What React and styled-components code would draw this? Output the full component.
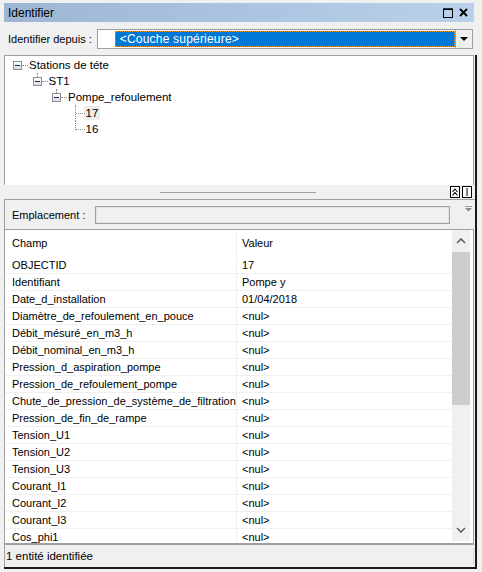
import React from "react"
import styled, { createGlobalStyle } from "styled-components"

const GlobalStyle = createGlobalStyle`
  html, body {
    margin: 0;
    padding: 0;
    background: #f0f0f0;
  }
  * {
    box-sizing: border-box;
  }
`

const font = `"Liberation Sans", Arial, sans-serif`

const Window = styled.div`
  width: 477px;
  height: 569px;
  padding: 3px 0 0 4px;
  background: #f0f0f0;
  font-family: ${font};
  font-size: 11px;
  color: #000;
  display: flex;
  flex-direction: column;
`

const TitleBar = styled.div`
  width: 470px;
  height: 19px;
  flex: none;
  display: flex;
  align-items: center;
  padding: 0 6px 0 4px;
  background: linear-gradient(to right, #9db6d4, #b9d1ea);
  font-size: 12px;
  .title {
    flex: 1;
  }
  svg {
    display: block;
  }
`

const TitleButtons = styled.div`
  display: flex;
  gap: 6px;
  align-items: center;
`

const Toolbar = styled.div`
  width: 470px;
  height: 33px;
  flex: none;
  display: flex;
  align-items: center;
  padding: 1px 1px 0 4px;
  gap: 5px;
`

const Combo = styled.div`
  flex: 1;
  height: 20px;
  display: flex;
  border: 1px solid #a0a0a0;
  background: #fff;
  .swatch {
    width: 17px;
    background: #fff;
  }
  .value {
    flex: 1;
    margin: 1px 0;
    background: #0078d7;
    border: 1px dotted #f39a2c;
    color: #fff;
    font-size: 12px;
    letter-spacing: 0.2px;
    padding-left: 4px;
    display: flex;
    align-items: center;
  }
`

const DropButton = styled.div`
  width: 17px;
  display: flex;
  align-items: center;
  justify-content: center;
  background: #f0f0f0;
  border-left: 1px solid #a0a0a0;
`

const Body = styled.div`
  flex: 1;
  display: flex;
  flex-direction: column;
  border-right: 2px solid #1a1a1a;
  border-bottom: 2px solid #1a1a1a;
  min-height: 0;
`

const Tree = styled.div`
  width: 470px;
  height: 130px;
  flex: none;
  background: #fff;
  border: 1px solid #a0a0a0;
  border-bottom: none;
  padding-top: 1px;
`

const TreeRow = styled.div`
  height: 16px;
  display: flex;
  align-items: center;
  padding-left: ${({ level }) => 8 + level * 19.5}px;
  font-size: 11.5px;
`

const Expander = styled.span`
  position: relative;
  width: 9px;
  height: 9px;
  flex: none;
  border: 1px solid #8e8f8f;
  background: linear-gradient(#ffffff, #d6dbe6);
  &::before {
    content: "";
    position: absolute;
    left: 1px;
    top: 3px;
    width: 5px;
    height: 1px;
    background: #1c2d4c;
  }
  &::after {
    content: "";
    display: ${({ stub }) => (stub ? "block" : "none")};
    position: absolute;
    left: 3px;
    top: -5px;
    height: 4px;
    border-left: 1px dotted #8a8a8a;
  }
`

const Stub = styled.span`
  width: 6px;
  flex: none;
  border-top: 1px dotted #8a8a8a;
  margin-right: 1px;
`

const LeafLines = styled.span`
  align-self: flex-start;
  width: 11px;
  flex: none;
  margin-left: 3px;
  position: relative;
  border-left: 1px dotted #8a8a8a;
  height: ${({ last }) => (last ? "9px" : "16px")};
  &::after {
    content: "";
    position: absolute;
    left: 0;
    top: 8px;
    width: 9px;
    border-top: 1px dotted #8a8a8a;
  }
`

const NodeLabel = styled.span`
  padding: 1px 2px;
  margin-left: -2px;
  background: ${({ selected }) => (selected ? "#ececec" : "transparent")};
`

const Splitter = styled.div`
  width: 470px;
  height: 14px;
  flex: none;
  display: flex;
  align-items: center;
  padding-right: 2px;
  .grip {
    margin-left: 156px;
    width: 156px;
    height: 1px;
    background: #a0a0a0;
  }
  .spacer {
    flex: 1;
  }
`

const MiniButton = styled.div`
  width: 10px;
  height: 12px;
  margin-left: 2px;
  border: 1px solid #000;
  background: #fff;
  display: flex;
  align-items: center;
  justify-content: center;
  svg {
    display: block;
  }
`

const Details = styled.div`
  flex: 1;
  display: flex;
  flex-direction: column;
  border-top: 1px solid #a0a0a0;
  border-left: 1px solid #a0a0a0;
  min-height: 0;
`

const LocationRow = styled.div`
  height: 29px;
  flex: none;
  display: flex;
  align-items: center;
  padding: 0 0 0 7px;
  .label {
    width: 83px;
  }
  .glyph {
    margin-left: 15px;
    align-self: flex-start;
    margin-top: 6px;
  }
`

const LocationField = styled.div`
  width: 355px;
  height: 18px;
  border: 1px solid #a0a0a0;
  box-shadow: inset 0 0 0 1px #e3e3e3;
  background: #f0f0f0;
`

const Grid = styled.div`
  flex: 1;
  width: 469px;
  display: flex;
  background: #fff;
  border-top: 1px solid #a0a0a0;
  border-right: 1px solid #a0a0a0;
  border-bottom: 2px solid #a0a0a0;
  padding: 0 3px 0 0;
  min-height: 0;
  overflow: hidden;
`

const Table = styled.div`
  flex: 1;
  display: flex;
  flex-direction: column;
  overflow: hidden;
`

const Row = styled.div`
  display: flex;
  flex: none;
  height: ${({ header }) => (header ? "27px" : "17px")};
  border-bottom: 1px solid ${({ header }) => (header ? "transparent" : "#f0f0f0")};
`

const Cell = styled.div`
  display: flex;
  align-items: center;
  white-space: nowrap;
  overflow: hidden;
  ${({ first }) =>
    first
      ? `width: 232px; padding-left: 7px; border-right: 1px solid #f0f0f0;`
      : `flex: 1; padding-left: 5px;`}
`

const Scrollbar = styled.div`
  width: 18px;
  flex: none;
  margin-bottom: 2px;
  display: flex;
  flex-direction: column;
  background: #f0f0f0;
  .arrow {
    height: 22px;
    display: flex;
    align-items: center;
    justify-content: center;
  }
  .thumb {
    height: 153px;
    background: #cdcdcd;
  }
  .track {
    flex: 1;
  }
`

const StatusBar = styled.div`
  height: 22px;
  flex: none;
  display: flex;
  align-items: center;
  padding: 0 0 0 1px;
  font-size: 11.5px;
  .text {
    flex: 1;
  }
  .sep {
    width: 1px;
    height: 17px;
    margin-right: 1px;
    background: #dadada;
  }
`

const fields = [
  ["OBJECTID", "17"],
  ["Identifiant", "Pompe y"],
  ["Date_d_installation", "01/04/2018"],
  ["Diamètre_de_refoulement_en_pouce", "<nul>"],
  ["Débit_mésuré_en_m3_h", "<nul>"],
  ["Débit_nominal_en_m3_h", "<nul>"],
  ["Pression_d_aspiration_pompe", "<nul>"],
  ["Pression_de_refoulement_pompe", "<nul>"],
  ["Chute_de_pression_de_système_de_filtration", "<nul>"],
  ["Pression_de_fin_de_rampe", "<nul>"],
  ["Tension_U1", "<nul>"],
  ["Tension_U2", "<nul>"],
  ["Tension_U3", "<nul>"],
  ["Courant_I1", "<nul>"],
  ["Courant_I2", "<nul>"],
  ["Courant_I3", "<nul>"],
  ["Cos_phi1", "<nul>"],
]

const tree = [
  { level: 0, label: "Stations de téte" },
  { level: 1, label: "ST1", stub: true },
  { level: 2, label: "Pompe_refoulement", stub: true },
  { level: 3, label: "17", leaf: true, selected: true },
  { level: 3, label: "16", leaf: true, last: true },
]

const Chevron = ({ down }) => (
  <svg width="10" height="6" viewBox="0 0 10 6">
    <path
      d={down ? "M1 1 L5 5 L9 1" : "M1 5 L5 1 L9 5"}
      fill="none"
      stroke="#606060"
      strokeWidth="1.6"
    />
  </svg>
)

export default function App() {
  return (
    <>
      <GlobalStyle />
      <Window>
        <TitleBar>
          <span className="title">Identifier</span>
          <TitleButtons>
            <svg width="10" height="10" viewBox="0 0 10 10">
              <rect x="0.5" y="1" width="9" height="8.5" fill="none" stroke="#000" />
              <rect x="0" y="0.5" width="10" height="1.5" fill="#000" />
            </svg>
            <svg width="9" height="9" viewBox="0 0 9 9">
              <path d="M1 1 L8 8 M8 1 L1 8" stroke="#000" strokeWidth="1.8" />
            </svg>
          </TitleButtons>
        </TitleBar>

        <Toolbar>
          <span>Identifier depuis :</span>
          <Combo>
            <div className="swatch" />
            <div className="value">&lt;Couche supérieure&gt;</div>
            <DropButton>
              <svg width="8" height="4" viewBox="0 0 8 4">
                <path d="M0 0 H8 L4 4 Z" fill="#000" />
              </svg>
            </DropButton>
          </Combo>
        </Toolbar>

        <Body>
          <Tree>
            {tree.map((n, i) => (
              <TreeRow key={i} level={n.level}>
                {n.leaf ? (
                  <LeafLines last={n.last} />
                ) : (
                  <>
                    <Expander stub={n.stub} />
                    <Stub />
                  </>
                )}
                <NodeLabel selected={n.selected}>{n.label}</NodeLabel>
              </TreeRow>
            ))}
          </Tree>

          <Splitter>
            <div className="grip" />
            <div className="spacer" />
            <MiniButton>
              <svg width="6" height="8" viewBox="0 0 6 8">
                <path d="M0.5 4 L3 1 L5.5 4 M0.5 7.5 L3 4.5 L5.5 7.5" fill="none" stroke="#000" strokeWidth="1.1" />
              </svg>
            </MiniButton>
            <MiniButton>
              <svg width="2" height="8" viewBox="0 0 2 8">
                <rect x="0.5" y="0" width="1" height="8" fill="#000" />
              </svg>
            </MiniButton>
          </Splitter>

          <Details>
            <LocationRow>
              <span className="label">Emplacement :</span>
              <LocationField />
              <svg className="glyph" width="7" height="6" viewBox="0 0 7 6">
                <rect x="0" y="0" width="7" height="1" fill="#9a9a9a" />
                <path d="M0 2 H7 L3.5 5.5 Z" fill="#8a8a8a" />
              </svg>
            </LocationRow>

            <Grid>
              <Table>
                <Row header>
                  <Cell first>Champ</Cell>
                  <Cell>Valeur</Cell>
                </Row>
                {fields.map(([name, value]) => (
                  <Row key={name}>
                    <Cell first>{name}</Cell>
                    <Cell>{value}</Cell>
                  </Row>
                ))}
              </Table>
              <Scrollbar>
                <div className="arrow">
                  <Chevron />
                </div>
                <div className="thumb" />
                <div className="track" />
                <div className="arrow">
                  <Chevron down />
                </div>
              </Scrollbar>
            </Grid>

            <StatusBar>
              <span className="text">1 entité identifiée</span>
              <span className="sep" />
            </StatusBar>
          </Details>
        </Body>
      </Window>
    </>
  )
}
